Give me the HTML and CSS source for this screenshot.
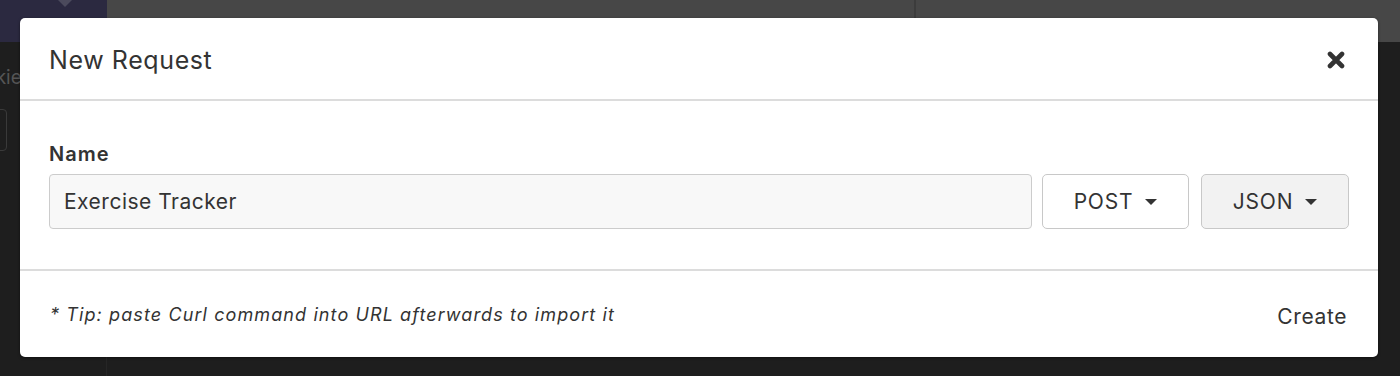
FILE: index.html
```html
<!DOCTYPE html>
<html lang="en">
<head>
    <meta charset="UTF-8">
    <title>New Request</title>
    <link rel="stylesheet" href="styles.css">
</head>
<body>
    <!-- app behind the modal -->
    <div class="app">
        <div class="topbar">
            <div class="side-head"><span class="side-caret"></span></div>
            <div class="pane-head"></div>
            <div class="pane-head right"></div>
        </div>
        <div class="content">
            <div class="sidebar">
                <div class="side-label">Cookies</div>
                <div class="side-box"></div>
            </div>
            <div class="main"></div>
        </div>
    </div>

    <!-- modal -->
    <div class="modal">
        <div class="modal-header">
            <h1>New Request</h1>
            <button class="close-btn" aria-label="Close">
                <svg width="18" height="18" viewBox="0 0 18 18"><path d="M3 3 L15 15 M15 3 L3 15" stroke="#333" stroke-width="4.6" stroke-linecap="round" fill="none"/></svg>
            </button>
        </div>
        <div class="modal-body">
            <label for="name" class="field-label">Name</label>
            <div class="field-row">
                <input type="text" id="name" class="input-field" value="Exercise Tracker">
                <button class="drop-btn">POST <span class="caret"></span></button>
                <button class="drop-btn grey">JSON <span class="caret"></span></button>
            </div>
        </div>
        <div class="modal-footer">
            <p class="tip">* Tip: paste Curl command into URL afterwards to import it</p>
            <button class="create-btn">Create</button>
        </div>
    </div>
</body>
</html>
```

FILE: styles.css
```css
* {
    margin: 0;
    padding: 0;
    box-sizing: border-box;
    font-family: Inter, 'Helvetica Neue', Arial, sans-serif;
}

body {
    width: 1400px;
    height: 376px;
    overflow: hidden;
    background: #1e1e1e;
    position: relative;
}

.app {
    height: 100%;
    display: flex;
    flex-direction: column;
}

.topbar {
    height: 42px;
    flex: none;
    display: flex;
}

.side-head {
    flex: none;
    width: 107px;
    background: #2b2940;
    position: relative;
}

.side-caret {
    position: absolute;
    left: 58px;
    top: 0;
    border-left: 7px solid transparent;
    border-right: 7px solid transparent;
    border-top: 7px solid #4b4a5c;
}

.pane-head {
    flex: none;
    width: 809px;
    background: #474747;
    border-right: 2px solid #3c3c3c;
}

.pane-head.right {
    flex: 1;
    border-right: none;
}

.content {
    flex: 1;
    display: flex;
}

.sidebar {
    flex: none;
    width: 107px;
    border-right: 1px solid #262626;
    padding-top: 24px;
    overflow: hidden;
}

.side-label {
    font-size: 19px;
    color: #555;
    margin-left: -41px;
    white-space: nowrap;
}

.side-box {
    width: 60px;
    height: 42px;
    margin-left: -53px;
    margin-top: 20px;
    border: 1px solid #3a3a3a;
    border-radius: 4px;
}

.main {
    flex: 1;
}

.modal {
    position: absolute;
    left: 20px;
    top: 18px;
    width: 1358px;
    background: #fff;
    border-radius: 5px;
    box-shadow: 0 1px 3px rgba(0, 0, 0, 0.5);
    color: #333;
}

.modal-header {
    height: 83px;
    display: flex;
    align-items: center;
    justify-content: space-between;
    padding: 0 33px 0 29px;
    border-bottom: 2px solid #dcdcdc;
}

.modal-header h1 {
    font-size: 25px;
    font-weight: 400;
    letter-spacing: 0.6px;
    color: #333;
    margin-top: 2px;
}

.close-btn {
    background: none;
    border: none;
    display: flex;
    margin-top: 2px;
}

.modal-body {
    padding: 41px 29px 40px;
    border-bottom: 2px solid #dcdcdc;
}

.field-label {
    display: block;
    font-size: 20px;
    font-weight: 600;
    letter-spacing: 1px;
    color: #333;
    margin-bottom: 8px;
}

.field-row {
    display: flex;
    gap: 10px;
}

.input-field {
    flex: 1;
    height: 55px;
    background: #f8f8f8;
    border: 1px solid #ccc;
    border-radius: 4px;
    padding: 0 14px;
    font-size: 21px;
    letter-spacing: 0.5px;
    color: #333;
}

.drop-btn {
    width: 147px;
    height: 55px;
    background: #fff;
    border: 1px solid #c8c8c8;
    border-radius: 5px;
    font-size: 21px;
    letter-spacing: 0.8px;
    color: #333;
    display: flex;
    align-items: center;
    justify-content: center;
    gap: 12px;
}

.drop-btn.grey {
    width: 148px;
    margin-left: 2px;
    background: #f2f2f2;
}

.caret {
    border-left: 6px solid transparent;
    border-right: 6px solid transparent;
    border-top: 6px solid #333;
}

.modal-footer {
    height: 86px;
    display: flex;
    align-items: center;
    justify-content: space-between;
    padding: 0 31px 0 30px;
}

.tip {
    font-size: 18px;
    font-style: italic;
    letter-spacing: 1.1px;
    color: #333;
}

.create-btn {
    background: none;
    border: none;
    font-size: 21px;
    letter-spacing: 0.6px;
    color: #333;
    margin-top: 4px;
}
```
